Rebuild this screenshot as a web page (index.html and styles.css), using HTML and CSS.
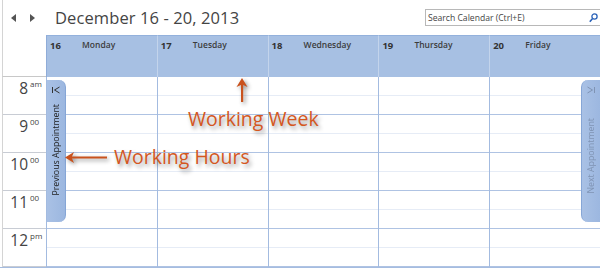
FILE: index.html
```html
<!DOCTYPE html>
<html>
  <head>
    <meta charset="utf-8">
    <title>Calendar - Work Week</title>
    <link rel="stylesheet" href="styles.css">
  </head>
  <body>
    <div class="cal">
      <div class="topbar">
        <div class="nav">
          <span class="navArrow left"></span>
          <span class="navArrow right"></span>
        </div>
        <div class="title">December 16 - 20, 2013</div>
        <div class="search">
          <span class="searchText">Search Calendar (Ctrl+E)</span>
          <svg class="lens" width="9" height="10" viewBox="0 0 9 10">
            <circle cx="5.5" cy="3.5" r="2.6" fill="none" stroke="#2a62b8" stroke-width="1.3"/>
            <line x1="3.6" y1="5.5" x2="0.8" y2="8.8" stroke="#2a62b8" stroke-width="1.6"/>
          </svg>
        </div>
      </div>

      <div class="head">
        <div class="corner"></div>
        <div class="day"><b>16</b><span>Monday</span></div>
        <div class="day"><b>17</b><span>Tuesday</span></div>
        <div class="day"><b>18</b><span>Wednesday</span></div>
        <div class="day"><b>19</b><span>Thursday</span></div>
        <div class="day"><b>20</b><span>Friday</span></div>
      </div>

      <div class="grid">
        <div class="times">
          <div class="hour"><span class="num">8</span><sup>am</sup></div>
          <div class="hour"><span class="num">9</span><sup>00</sup></div>
          <div class="hour"><span class="num">10</span><sup>00</sup></div>
          <div class="hour"><span class="num">11</span><sup>00</sup></div>
          <div class="hour"><span class="num">12</span><sup>pm</sup></div>
        </div>
        <div class="col"><div class="slot"></div><div class="slot"></div><div class="slot"></div><div class="slot"></div><div class="slot"></div></div>
        <div class="col"><div class="slot"></div><div class="slot"></div><div class="slot"></div><div class="slot"></div><div class="slot"></div></div>
        <div class="col"><div class="slot"></div><div class="slot"></div><div class="slot"></div><div class="slot"></div><div class="slot"></div></div>
        <div class="col"><div class="slot"></div><div class="slot"></div><div class="slot"></div><div class="slot"></div><div class="slot"></div></div>
        <div class="col"><div class="slot"></div><div class="slot"></div><div class="slot"></div><div class="slot"></div><div class="slot"></div></div>
      </div>

      <!-- appointment tabs sit over the grid -->
      <div class="tab prev">
        <svg width="8" height="8" viewBox="0 0 8 8">
          <line x1="1" y1="0.5" x2="7" y2="0.5" stroke="#333" stroke-width="1"/>
          <polyline points="1,7.5 4,2.5 7,7.5" fill="none" stroke="#333" stroke-width="1"/>
        </svg>
        <span class="tabText">Previous Appointment</span>
      </div>
      <div class="tab next">
        <svg width="8" height="8" viewBox="0 0 8 8">
          <line x1="1" y1="7.5" x2="7" y2="7.5" stroke="#7f93b3" stroke-width="1"/>
          <polyline points="1,0.5 4,5.5 7,0.5" fill="none" stroke="#7f93b3" stroke-width="1"/>
        </svg>
        <span class="tabText">Next Appointment</span>
      </div>

      <!-- callouts -->
      <svg class="arrowUp" width="20" height="30" viewBox="0 0 20 30">
        <path d="M10 2 L4.5 11 L9 9 L9 26 L11.2 26 L11.2 9 L15.5 11 Z" fill="#c9521d"/>
      </svg>
      <div class="note week">Working Week</div>
      <svg class="arrowLeft" width="48" height="16" viewBox="0 0 48 16">
        <path d="M2 7.5 L11 2 L9 6.4 L44 6.4 L44 8.6 L9 8.6 L11 13 Z" fill="#c9521d"/>
      </svg>
      <div class="note hours">Working Hours</div>
    </div>
  </body>
</html>
```

FILE: styles.css
```css
html, body {
  margin: 0;
  padding: 0;
  background: #fff;
}
.cal {
  position: relative;
  width: 600px;
  height: 270px;
  overflow: hidden;
  font-family: "Open Sans", "Noto Sans", sans-serif;
  color: #444;
}
.topbar {
  height: 35px;
  display: flex;
  align-items: center;
  border-left: 1px solid #d4d4d4;
  margin-left: 2px;
  box-sizing: border-box;
}
.nav {
  display: flex;
  gap: 14px;
  padding-left: 8px;
  width: 45px;
  box-sizing: border-box;
}
.navArrow {
  width: 0;
  height: 0;
  border-top: 4px solid transparent;
  border-bottom: 4px solid transparent;
}
.navArrow.left {
  border-right: 5px solid #555;
}
.navArrow.right {
  border-left: 5px solid #555;
}
.title {
  font-size: 16.5px;
  color: #444;
  margin-left: 7px;
  flex: 1;
  letter-spacing: 0.1px;
}
.search {
  width: 175px;
  height: 17px;
  border: 1px solid #b8b8b8;
  border-right: none;
  box-sizing: border-box;
  display: flex;
  align-items: center;
  justify-content: space-between;
  padding: 0 2px 0 2px;
}
.searchText {
  font-size: 8.6px;
  color: #444;
}
.lens {
  display: block;
}

.head {
  display: grid;
  grid-template-columns: 46px repeat(5, 1fr);
  height: 42px;
}
.corner {
  border-left: 1px solid #d4d4d4;
  margin-left: 2px;
  border-bottom: 1px solid #c8c8c8;
}
.day {
  background: #a7c0e3;
  border-left: 1px solid #c3d4ec;
  border-top: 1px solid #93b1dc;
  padding: 3px 0 0 3px;
  font-size: 8.5px;
  color: #333;
  display: flex;
  align-items: flex-start;
}
.corner + .day {
  border-left: 1px solid #8facd8;
}
.day b {
  font-size: 9.5px;
  width: 32px;
}
.day span {
  font-weight: 600;
  color: #3c3c3c;
}

.grid {
  display: grid;
  grid-template-columns: 46px repeat(5, 1fr);
  border-bottom: 1px solid #a5bce0;
}
.times {
  border-left: 1px solid #d4d4d4;
  margin-left: 2px;
}
.hour {
  height: 38px;
  box-sizing: border-box;
  border-bottom: 1px solid #c8ccd4;
  display: flex;
  align-items: flex-start;
  padding-top: 2px;
}
.hour .num {
  width: 25px;
  text-align: right;
  font-size: 15.5px;
  line-height: 18px;
  color: #444;
}
.hour sup {
  font-size: 8px;
  line-height: 10px;
  margin-left: 2px;
  vertical-align: top;
  color: #444;
}
.col {
  border-left: 1px solid #a3bbe0;
}
.slot {
  height: 38px;
  box-sizing: border-box;
  border-bottom: 1px solid #afc3e3;
  background: linear-gradient(#fff 18px, #e6ecf6 18px, #e6ecf6 19px, #fff 19px);
}

.tab {
  position: absolute;
  top: 80px;
  width: 19px;
  height: 142px;
  background: linear-gradient(90deg, #a9c1e5, #9cb7e0);
  display: flex;
  flex-direction: column;
  align-items: center;
  padding-top: 6px;
  box-sizing: border-box;
  gap: 8px;
}
.tab.prev {
  left: 47px;
  border-radius: 0 7px 7px 0;
  border-right: 1px solid #86a6d6;
}
.tab.next {
  left: 581px;
  border-radius: 7px 0 0 7px;
  border-left: 1px solid #86a6d6;
}
.tab svg {
  display: block;
  transform: rotate(-90deg);
}
.tabText {
  writing-mode: vertical-rl;
  transform: rotate(180deg);
  font-size: 8.8px;
  white-space: nowrap;
  color: #222;
}
.tab.prev .tabText {
  margin-top: 2px;
}
.tab.next .tabText {
  color: #7f93b3;
  margin-top: 16px;
}

.note {
  position: absolute;
  font-size: 19.5px;
  color: #d4571f;
  text-shadow: 2px 3px 4px rgba(0, 0, 0, 0.4);
  white-space: nowrap;
}
.note.week {
  left: 188px;
  top: 105px;
}
.note.hours {
  left: 114px;
  top: 143px;
}
.arrowUp {
  position: absolute;
  left: 232px;
  top: 76px;
  filter: drop-shadow(2px 2px 2px rgba(0, 0, 0, 0.45));
}
.arrowLeft {
  position: absolute;
  left: 63px;
  top: 150px;
  filter: drop-shadow(2px 2px 2px rgba(0, 0, 0, 0.45));
}
```
